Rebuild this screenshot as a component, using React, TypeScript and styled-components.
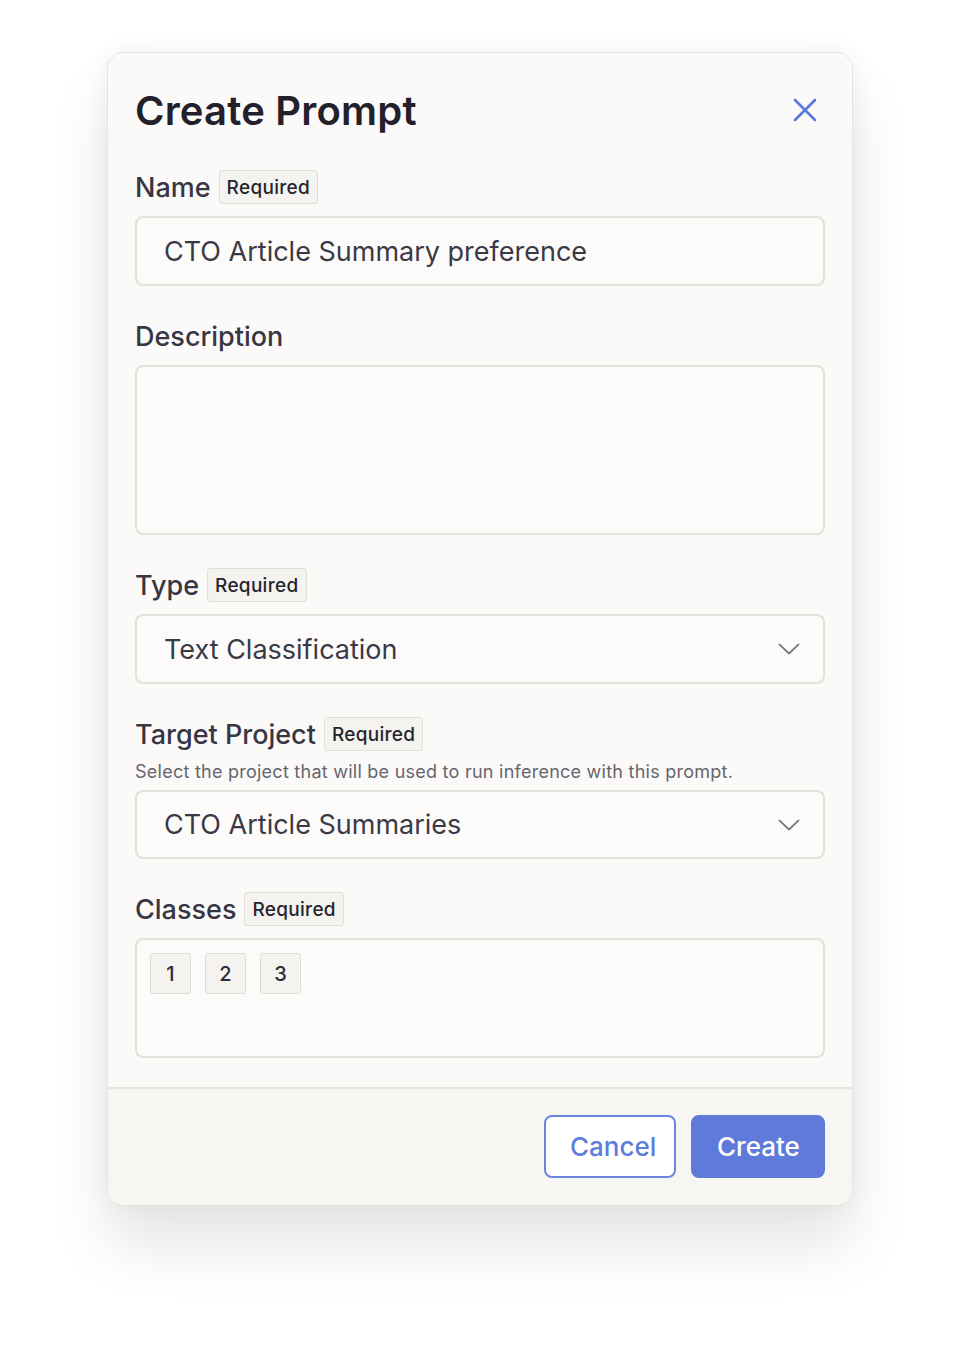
import styled, { createGlobalStyle } from 'styled-components';

const GlobalStyle = createGlobalStyle`
  html, body {
    margin: 0;
    padding: 0;
    background: #ffffff;
    font-family: Inter, 'Noto Sans', sans-serif;
  }
`;

const classes = ['1', '2', '3'];

function Chevron() {
  return (
    <svg width="22" height="12" viewBox="0 0 22 12" fill="none">
      <path d="M1.5 1.5L11 10.5L20.5 1.5" stroke="#7c7b86" strokeWidth="1.8" strokeLinecap="round" strokeLinejoin="round" />
    </svg>
  );
}

function CloseIcon() {
  return (
    <svg width="24" height="24" viewBox="0 0 24 24" fill="none">
      <path d="M2 2L22 22M22 2L2 22" stroke="#5b77de" strokeWidth="2.6" strokeLinecap="round" />
    </svg>
  );
}

export default function App() {
  return (
    <>
      <GlobalStyle />
      <Page>
        <Modal>
          <Body>
            <Header>
              <Title>Create Prompt</Title>
              <CloseButton aria-label="Close">
                <CloseIcon />
              </CloseButton>
            </Header>

            <Field>
              <LabelRow>
                <Label>Name</Label>
                <Badge>Required</Badge>
              </LabelRow>
              <Input>CTO Article Summary preference</Input>
            </Field>

            <Field>
              <LabelRow>
                <Label>Description</Label>
              </LabelRow>
              <TextArea />
            </Field>

            <Field>
              <LabelRow>
                <Label>Type</Label>
                <Badge>Required</Badge>
              </LabelRow>
              <Select>
                <span>Text Classification</span>
                <Chevron />
              </Select>
            </Field>

            <Field>
              <LabelRow>
                <Label>Target Project</Label>
                <Badge>Required</Badge>
              </LabelRow>
              <Help>Select the project that will be used to run inference with this prompt.</Help>
              <Select $tight>
                <span>CTO Article Summaries</span>
                <Chevron />
              </Select>
            </Field>

            <Field>
              <LabelRow>
                <Label>Classes</Label>
                <Badge>Required</Badge>
              </LabelRow>
              <ChipBox>
                {classes.map((c) => (
                  <Chip key={c}>{c}</Chip>
                ))}
              </ChipBox>
            </Field>
          </Body>

          <Footer>
            <CancelButton>Cancel</CancelButton>
            <PrimaryButton>Create</PrimaryButton>
          </Footer>
        </Modal>
      </Page>
    </>
  );
}

const Page = styled.div`
  width: 960px;
  min-height: 1367px;
  padding-top: 52px;
  box-sizing: border-box;
`;

const Modal = styled.div`
  width: 746px;
  margin: 0 auto;
  background: #fbfaf8;
  border: 1px solid #e6e3dd;
  border-radius: 16px;
  box-sizing: border-box;
  overflow: hidden;
  box-shadow: 0 40px 60px rgba(0, 0, 0, 0.1), 0 0 24px rgba(0, 0, 0, 0.05);
`;

const Body = styled.div`
  display: flex;
  flex-direction: column;
  gap: 33px;
  padding: 33px 27px 29px;
`;

const Header = styled.div`
  display: flex;
  align-items: center;
  justify-content: space-between;
  height: 48px;
  margin-bottom: 3px;
`;

const Title = styled.h1`
  margin: 0;
  font-size: 40px;
  font-weight: 600;
  letter-spacing: 0.2px;
  color: #22212b;
`;

const CloseButton = styled.button`
  display: flex;
  align-items: center;
  justify-content: center;
  border: none;
  background: none;
  padding: 0;
  margin-right: 8px;
  cursor: pointer;
`;

const Field = styled.div`
  display: flex;
  flex-direction: column;
  gap: 12px;
`;

const LabelRow = styled.div`
  display: flex;
  align-items: center;
  gap: 8px;
  height: 34px;
`;

const Label = styled.span`
  font-size: 27px;
  font-weight: 500;
  color: #373644;
`;

const Badge = styled.span`
  display: inline-flex;
  align-items: center;
  height: 34px;
  padding: 0 7px;
  box-sizing: border-box;
  border: 1px solid #e2dfd8;
  border-radius: 3px;
  background: #f4f3ef;
  font-size: 19px;
  font-weight: 500;
  letter-spacing: 0.3px;
  color: #26252e;
`;

const Help = styled.p`
  margin: -2px 0 -5px;
  font-size: 18px;
  line-height: 22px;
  letter-spacing: 0.25px;
  color: #66656f;
`;

const Input = styled.div`
  display: flex;
  align-items: center;
  height: 70px;
  padding: 0 27px;
  box-sizing: border-box;
  border: 2px solid #e4e1db;
  border-radius: 8px;
  background: #fcfbfa;
  font-size: 27px;
  color: #3a3946;
`;

const TextArea = styled.div`
  height: 170px;
  box-sizing: border-box;
  border: 2px solid #e4e1db;
  border-radius: 8px;
  background: #fcfbfa;
`;

const Select = styled(Input)<{ $tight?: boolean }>`
  justify-content: space-between;
  padding-right: 23px;
  height: ${({ $tight }) => ($tight ? '69px' : '70px')};
`;

const ChipBox = styled.div`
  display: flex;
  align-items: flex-start;
  gap: 14px;
  height: 120px;
  padding: 13px 13px;
  box-sizing: border-box;
  border: 2px solid #e4e1db;
  border-radius: 8px;
  background: #fcfbfa;
`;

const Chip = styled.div`
  display: flex;
  align-items: center;
  justify-content: center;
  width: 41px;
  height: 41px;
  box-sizing: border-box;
  border: 1px solid #dedbd4;
  border-radius: 3px;
  background: #f4f3ef;
  font-size: 20px;
  font-weight: 500;
  color: #2f2e3a;
`;

const Footer = styled.div`
  display: flex;
  justify-content: flex-end;
  gap: 15px;
  padding: 26px 27px 27px;
  border-top: 2px solid #e8e5df;
  background: #f7f6f3;
`;

const BaseButton = styled.button`
  height: 63px;
  padding: 0 24px;
  border-radius: 8px;
  font-family: inherit;
  font-size: 26px;
  font-weight: 500;
  cursor: pointer;
`;

const CancelButton = styled(BaseButton)`
  width: 132px;
  background: #ffffff;
  border: 2px solid #6b84e0;
  color: #5f7bdc;
`;

const PrimaryButton = styled(BaseButton)`
  width: 134px;
  background: #5f7ada;
  border: 2px solid #5f7ada;
  color: #ffffff;
`;
